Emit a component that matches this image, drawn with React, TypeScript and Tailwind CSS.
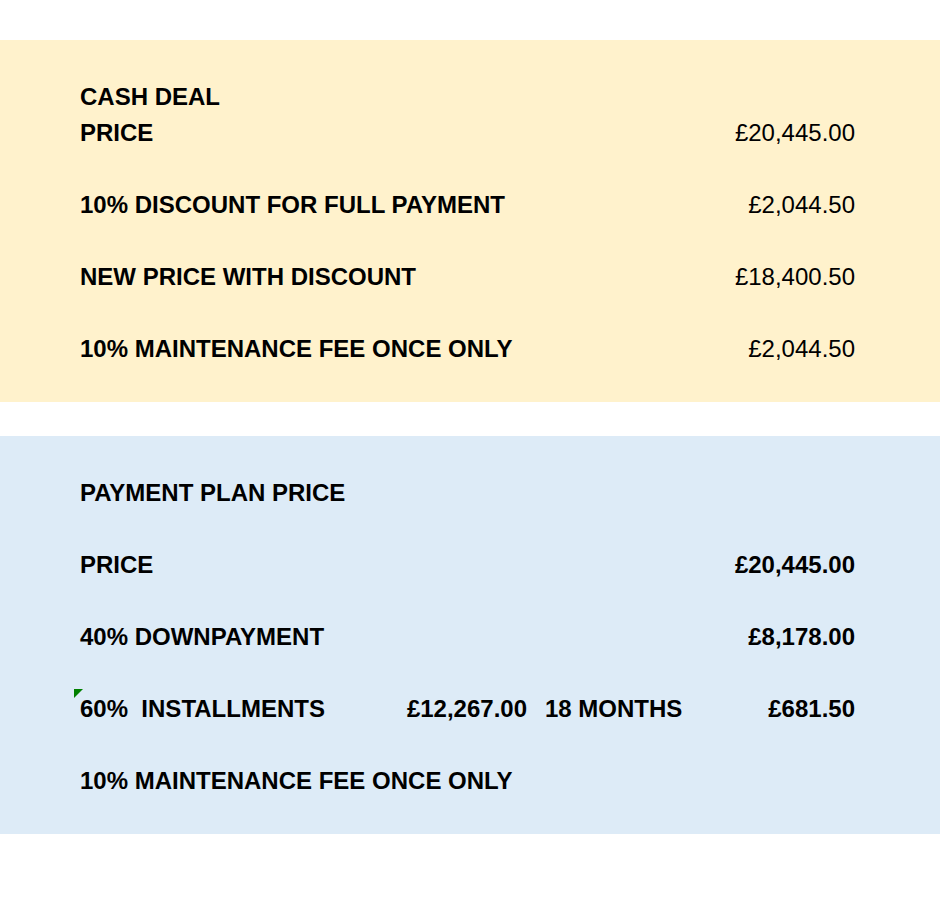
type Row = {
  label?: string;
  amount?: string;
  bold?: boolean;
};

const cashRows: Row[] = [
  {},
  { label: "CASH DEAL" },
  { label: "PRICE", amount: "£20,445.00" },
  {},
  { label: "10% DISCOUNT FOR FULL PAYMENT", amount: "£2,044.50" },
  {},
  { label: "NEW PRICE WITH DISCOUNT", amount: "£18,400.50" },
  {},
  { label: "10% MAINTENANCE FEE ONCE ONLY", amount: "£2,044.50" },
  {},
];

function SheetRow({ label, amount, bold }: Row) {
  return (
    <div className="flex h-9 items-center justify-between">
      <span className="font-bold">{label}</span>
      {amount ? <span className={bold ? "font-bold" : "font-normal"}>{amount}</span> : null}
    </div>
  );
}

export default function App() {
  return (
    <div
      className="min-h-[912px] w-[940px] bg-white pt-10 text-[24px] leading-9 text-black"
      style={{ fontFamily: '"Liberation Sans", Arial, sans-serif' }}
    >
      <section className="h-[362px] overflow-hidden bg-[#fff2cc] pl-[80px] pr-[85px] pt-[3px]">
        {cashRows.map((r, i) => (
          <SheetRow key={i} {...r} />
        ))}
      </section>

      <section className="mt-[34px] h-[398px] overflow-hidden bg-[#ddebf7] pl-[80px] pr-[85px] pt-[3px]">
        <SheetRow />
        <SheetRow label="PAYMENT PLAN PRICE" />
        <SheetRow />
        <SheetRow label="PRICE" amount="£20,445.00" bold />
        <SheetRow />
        <SheetRow label="40% DOWNPAYMENT" amount="£8,178.00" bold />
        <SheetRow />
        <div className="relative grid h-9 grid-cols-[315px_132px_1fr_auto] items-center font-bold">
          {/* excel error marker */}
          <svg
            className="absolute left-[-6px] top-[-2px]"
            width="9"
            height="9"
            viewBox="0 0 9 9"
          >
            <polygon points="0,0 9,0 0,9" fill="#008000" />
          </svg>
          <span className="whitespace-pre">60%  INSTALLMENTS</span>
          <span className="text-right">£12,267.00</span>
          <span className="pl-[18px]">18 MONTHS</span>
          <span className="text-right">£681.50</span>
        </div>
        <SheetRow />
        <SheetRow label="10% MAINTENANCE FEE ONCE ONLY" />
        <SheetRow />
      </section>
    </div>
  );
}
